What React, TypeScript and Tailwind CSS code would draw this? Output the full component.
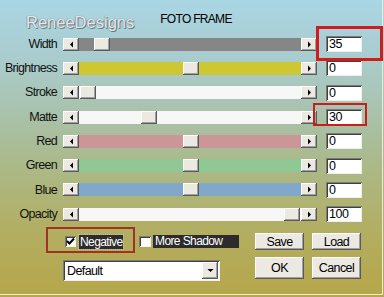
import React from "react";

type Row = {
  label: string;
  track: string;
  thumb: number;
  value: string;
};

const rows: Row[] = [
  { label: "Width", track: "bg-[#868686]", thumb: 15, value: "35" },
  { label: "Brightness", track: "bg-[#cdc734]", thumb: 104, value: "0" },
  { label: "Stroke", track: "bg-[#f7f7f7]", thumb: 1, value: "0" },
  { label: "Matte", track: "bg-[#f7f7f7]", thumb: 62, value: "30" },
  { label: "Red", track: "bg-[#cc9597]", thumb: 104, value: "0" },
  { label: "Green", track: "bg-[#8fc895]", thumb: 104, value: "0" },
  { label: "Blue", track: "bg-[#81a8cb]", thumb: 104, value: "0" },
  { label: "Opacity", track: "bg-[#f7f7f7]", thumb: 205, value: "100" },
];

const raised =
  "bg-[#ece9e2] shadow-[inset_-1px_-1px_#5a5a5a,inset_1px_1px_#ffffff,inset_-2px_-2px_#a0a0a0]";
const sunken =
  "bg-white shadow-[inset_1px_1px_#7a7a7a,inset_-1px_-1px_#f0f0f0,inset_2px_2px_#404040]";

const Arrow = ({ dir }: { dir: "left" | "right" | "down" }) => (
  <svg width="7" height="7" viewBox="0 0 7 7">
    {dir === "left" && <polygon points="5,0.5 5,6.5 2,3.5" fill="#000" />}
    {dir === "right" && <polygon points="2,0.5 2,6.5 5,3.5" fill="#000" />}
    {dir === "down" && <polygon points="0.5,2 6.5,2 3.5,5" fill="#000" />}
  </svg>
);

const Slider = ({ row }: { row: Row }) => (
  <div className="flex h-[13px] w-[254px]">
    <div className={`${raised} w-[16px] h-full flex items-center justify-center`}>
      <Arrow dir="left" />
    </div>
    <div className={`${row.track} flex-1 h-full flex`}>
      <div className={`${raised} w-[16px] h-full`} style={{ marginLeft: row.thumb }} />
    </div>
    <div className={`${raised} w-[16px] h-full flex items-center justify-center`}>
      <Arrow dir="right" />
    </div>
  </div>
);

const Button = ({ label, h }: { label: string; h: string }) => (
  <div className={`${raised} w-[49px] ${h} flex items-center justify-center text-[12.5px] tracking-[-0.6px] text-black`}>
    {label}
  </div>
);

export default function App() {
  return (
    <div
      className="relative w-[384px] h-[297px] overflow-hidden bg-[linear-gradient(to_bottom,#a9d6e4_0%,#a9cdd0_18%,#a9c2ac_38%,#abb98a_55%,#b2ae62_78%,#b6a649_100%)]"
      style={{ fontFamily: '"Liberation Sans", Arial, sans-serif' }}
    >
      <div className="w-[383px] h-[295px] border-r border-b border-[#ecebd6] flex flex-col">
        {/* header */}
        <div className="h-[32px] flex">
          <div className="ml-[26px] mt-[14px] text-[16.5px] leading-none text-[#e6e6e6] [text-shadow:1px_1px_0_#6c7a80,-0.5px_-0.5px_0_#8e9ca2,0_0_1px_#6c7a80]">
            ReneeDesigns
          </div>
          <div className="ml-[26px] mt-[13px] text-[12px] tracking-[-0.7px] leading-none text-black">
            FOTO FRAME
          </div>
        </div>

        {/* slider rows */}
        <div className="flex flex-col">
          {rows.map((row) => (
            <div key={row.label} className="h-[24.3px] flex items-center">
              <div className="w-[57px] text-right text-[12.5px] tracking-[-0.7px] text-[#111]">{row.label}</div>
              <div className="ml-[6px]">
                <Slider row={row} />
              </div>
              <div
                className={`${sunken} ml-[9px] w-[36px] h-[16px] pl-[3px] text-[12.5px] tracking-[-0.4px] leading-[16px] text-black`}
              >
                {row.value}
              </div>
            </div>
          ))}
        </div>

        {/* checkboxes and Save / Load */}
        <div className="mt-[7px] h-[17px] flex items-center">
          <div className={`${sunken} ml-[65px] w-[11px] h-[11px] flex items-center justify-center`}>
            <svg width="9" height="9" viewBox="0 0 9 9">
              <path d="M1 4 L3.5 6.5 L8 1.5" stroke="#000" strokeWidth="2" fill="none" />
            </svg>
          </div>
          <div className="ml-[3px] w-[44px] h-[14px] pl-[1px] bg-[#2c2c2c] outline outline-1 outline-dotted outline-[#bbbbbb] text-white text-[12px] tracking-[-0.6px] leading-[14px]">
            Negative
          </div>
          <div className={`${sunken} ml-[16px] w-[12px] h-[11px]`} />
          <div className="ml-[2px] w-[86px] h-[13px] pl-[2px] bg-[#2c2c2c] text-white text-[12px] tracking-[-0.6px] leading-[13px]">
            More Shadow
          </div>
          <div className="ml-[16px]">
            <Button label="Save" h="h-[17px]" />
          </div>
          <div className="ml-[8px]">
            <Button label="Load" h="h-[17px]" />
          </div>
        </div>

        {/* preset dropdown and OK / Cancel */}
        <div className="mt-[7px] flex items-start">
          <div className={`${sunken} ml-[63px] mt-[3px] w-[157px] h-[21px] flex items-center`}>
            <div className="flex-1 pl-[4px] text-[12.5px] tracking-[-0.6px] text-black">Default</div>
            <div className={`${raised} w-[16px] h-[17px] mr-[2px] flex items-center justify-center`}>
              <Arrow dir="down" />
            </div>
          </div>
          <div className="ml-[35px]">
            <Button label="OK" h="h-[22px]" />
          </div>
          <div className="ml-[8px]">
            <Button label="Cancel" h="h-[22px]" />
          </div>
        </div>
      </div>

      {/* red highlight annotations */}
      <div className="absolute left-[316px] top-[26px] w-[67px] h-[35px] border-[3px] border-[#d21c1c]" />
      <div className="absolute left-[313px] top-[103px] w-[54px] h-[23px] border-[2.5px] border-[#c81e1e]" />
      <div className="absolute left-[46px] top-[227px] w-[89px] h-[26px] border-2 border-[#a03222]" />
    </div>
  );
}
